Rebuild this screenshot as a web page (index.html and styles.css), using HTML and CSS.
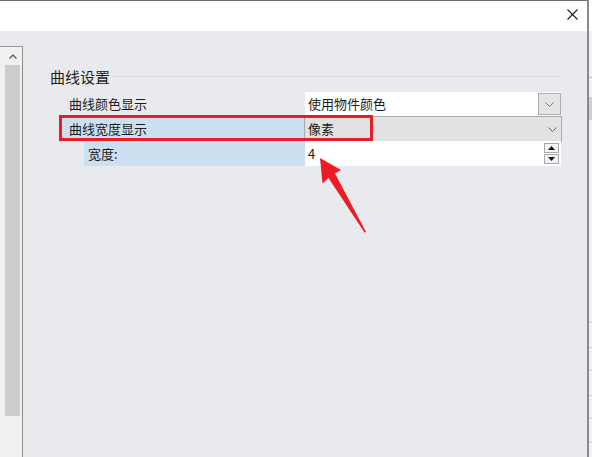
FILE: index.html
```html
<!DOCTYPE html>
<html lang="zh-CN">
<head>
<meta charset="utf-8">
<title>曲线设置</title>
<link rel="stylesheet" href="styles.css">
</head>
<body>
<div class="page">
  <div class="dialog">
    <div class="titlebar">
      <svg class="close" width="11" height="11" viewBox="0 0 11 11"><path d="M0.5 0.5 L10.5 10.5 M10.5 0.5 L0.5 10.5" stroke="#1a1a1a" stroke-width="1.1" fill="none"/></svg>
    </div>
    <div class="main">
      <div class="side">
        <div class="sb-up"><svg width="8" height="5" viewBox="0 0 8 5"><path d="M0.5 4.5 L4 1 L7.5 4.5" stroke="#606060" stroke-width="1.4" fill="none"/></svg></div>
        <div class="sb-thumb"></div>
        <div class="sb-rest"></div>
      </div>
      <div class="content">
        <div class="group-head">
          <span class="group-title">曲线设置</span>
          <span class="group-line"></span>
        </div>
        <div class="grid">
          <div class="lbl">曲线颜色显示</div>
          <div class="val val-combo">
            <span class="txt">使用物件颜色</span>
            <span class="dd-btn"><svg width="9" height="5" viewBox="0 0 9 5"><path d="M0.5 0.5 L4.5 4.5 L8.5 0.5" stroke="#7a7a7a" stroke-width="1" fill="none"/></svg></span>
          </div>
          <div class="lbl sel">曲线宽度显示</div>
          <div class="val val-active">
            <span class="txt">像素</span>
            <svg class="chev" width="9" height="5" viewBox="0 0 9 5"><path d="M0.5 0.5 L4.5 4.5 L8.5 0.5" stroke="#606060" stroke-width="1" fill="none"/></svg>
          </div>
          <div class="lbl sel sub">宽度:</div>
          <div class="val val-spin">
            <span class="txt">4</span>
            <span class="spin">
              <span class="spin-btn"><svg width="7" height="4" viewBox="0 0 7 4"><path d="M0 4 L3.5 0 L7 4 Z" fill="#111"/></svg></span>
              <span class="spin-btn"><svg width="7" height="4" viewBox="0 0 7 4"><path d="M0 0 L7 0 L3.5 4 Z" fill="#111"/></svg></span>
            </span>
          </div>
        </div>
      </div>
    </div>
  </div>
  <div class="behind"></div>
  <div class="redbox"></div>
  <svg class="arrow" width="592" height="457" viewBox="0 0 592 457">
    <polygon points="320,158 341,170 335,173.5 366,232 364.5,232.5 328.5,178 322.5,183.5" fill="#ec1c24"/>
  </svg>
</div>
</body>
</html>
```
FILE: styles.css
```css
html, body {
  margin: 0;
  padding: 0;
}
body {
  width: 592px;
  height: 457px;
  overflow: hidden;
  font-family: "Noto Sans CJK SC", "Noto Sans", sans-serif;
  color: #1b1b1b;
  background: #f0f0f0;
}
.page {
  position: relative;
  display: flex;
  width: 592px;
  height: 457px;
}
.dialog {
  width: 587px;
  height: 457px;
  box-sizing: border-box;
  border-top: 1px solid #6f6f6f;
  display: flex;
  flex-direction: column;
  flex: none;
}
.titlebar {
  height: 30px;
  background: #ffffff;
  display: flex;
  justify-content: flex-end;
  align-items: flex-start;
  padding: 8px 9px 0 0;
  box-sizing: border-box;
  flex: none;
}
.main {
  flex: 1;
  display: flex;
  background: #e9eaee;
}
.side {
  width: 22px;
  margin-top: 15px;
  border-top: 1px solid #9a9a9a;
  border-right: 1px solid #8e8e8e;
  background: #f0f0f0;
  display: flex;
  flex-direction: column;
  flex: none;
}
.sb-up {
  height: 18px;
  display: flex;
  justify-content: center;
  align-items: flex-start;
  padding: 7px 0 0 3px;
  box-sizing: border-box;
}
.sb-thumb {
  height: 351px;
  margin-left: 5px;
  width: 15px;
  background: #cdcdcd;
}
.sb-rest {
  flex: 1;
}
.content {
  flex: 1;
  padding-left: 27px;
  padding-right: 27px;
}
.group-head {
  margin-top: 36px;
  height: 20px;
  display: flex;
  align-items: center;
}
.group-title {
  font-size: 15px;
  line-height: 20px;
  color: #1e1e1e;
}
.group-line {
  flex: 1;
  height: 1px;
  background: #d9dadd;
  margin-left: 2px;
  margin-top: -2px;
}
.grid {
  margin-top: 4px;
  margin-left: 12px;
  display: grid;
  grid-template-columns: 243px 257px;
  grid-auto-rows: 25px;
  font-size: 13px;
}
.lbl {
  padding-left: 7px;
  display: flex;
  align-items: center;
  line-height: 18px;
}
.lbl.sel {
  background: #cde0f1;
}
.lbl.sub {
  margin-left: 22px;
  padding-left: 4px;
}
.val {
  display: flex;
  align-items: center;
  justify-content: space-between;
  line-height: 18px;
}
.txt {
  padding-left: 3px;
}
.val-combo {
  background: #ffffff;
  margin-top: 1px;
  margin-right: 1px;
}
.dd-btn {
  width: 23px;
  height: 22px;
  box-sizing: border-box;
  border: 1px solid #acacac;
  background: #e4e4e4;
  display: flex;
  justify-content: center;
  align-items: center;
  margin-right: 0;
}
.val-active {
  background: #e2e2e2;
  border: 1px solid #a9a9a9;
  box-sizing: border-box;
  height: 26px;
  margin-left: -1px;
}
.val-active .txt {
  padding-left: 3px;
}
.chev {
  margin-right: 4px;
}
.val-spin {
  background: #ffffff;
  margin-right: 1px;
}
.spin {
  display: flex;
  flex-direction: column;
  gap: 1px;
  margin-right: 2px;
}
.spin-btn {
  width: 15px;
  height: 10px;
  box-sizing: border-box;
  border: 1px solid #a8a8a8;
  background: #f3f3f3;
  display: flex;
  justify-content: center;
  align-items: center;
}
.behind {
  width: 5px;
  flex: none;
  border-left: 2px solid #8a8a8a;
  box-sizing: border-box;
  background:
    linear-gradient(to bottom,
      #ffffff 0, #ffffff 31px,
      #f0f0f0 31px, #f0f0f0 77px,
      #bdbdbd 77px, #bdbdbd 78px,
      #f0f0f0 78px, #f0f0f0 97px,
      #cfcfcf 97px, #cfcfcf 120px,
      #f0f0f0 120px, #f0f0f0 322px,
      #d4d4d4 322px, #d4d4d4 323px,
      #f0f0f0 323px, #f0f0f0 347px,
      #d4d4d4 347px, #d4d4d4 348px,
      #f0f0f0 348px, #f0f0f0 370px,
      #d4d4d4 370px, #d4d4d4 371px,
      #f0f0f0 371px, #f0f0f0 395px,
      #d4d4d4 395px, #d4d4d4 396px,
      #f0f0f0 396px, #f0f0f0 418px,
      #d4d4d4 418px, #d4d4d4 419px,
      #f0f0f0 419px, #f0f0f0 442px,
      #d4d4d4 442px, #d4d4d4 443px,
      #f0f0f0 443px);
}
.redbox {
  position: absolute;
  left: 59px;
  top: 115px;
  width: 314px;
  height: 26px;
  box-sizing: border-box;
  border: 3px solid #e81d25;
}
.arrow {
  position: absolute;
  left: 0;
  top: 0;
  pointer-events: none;
}
```
